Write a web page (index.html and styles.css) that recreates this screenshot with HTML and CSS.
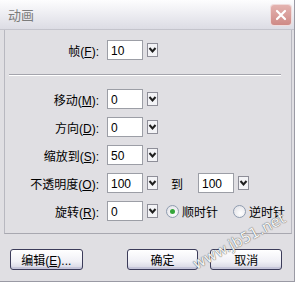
FILE: index.html
```html
<!DOCTYPE html>
<html lang="zh">
<head>
    <meta charset="UTF-8">
    <title>动画</title>
    <link rel="stylesheet" href="styles.css">
</head>
<body>
    <div class="window">
        <div class="titlebar">
            <span class="title">动画</span>
            <span class="close">
                <svg width="20" height="20" viewBox="0 0 20 20"><path d="M6 6 L14 14 M14 6 L6 14" stroke="#fff" stroke-width="2.2" stroke-linecap="round"/></svg>
            </span>
        </div>

        <div class="content">
            <div class="row">
                <label class="lbl">帧(<u>F</u>):</label>
                <span class="field">10</span>
                <span class="drop"><svg width="11" height="14" viewBox="0 0 11 14"><rect x="0.5" y="0.5" width="10" height="13" fill="#f3f3f6" stroke="#8e8e98"/><path d="M2.5 5 L5.5 8.5 L8.5 5" fill="none" stroke="#1e1e1e" stroke-width="2"/></svg></span>
            </div>

            <div class="sep"></div>

            <div class="row">
                <label class="lbl">移动(<u>M</u>):</label>
                <span class="field">0</span>
                <span class="drop"><svg width="11" height="14" viewBox="0 0 11 14"><rect x="0.5" y="0.5" width="10" height="13" fill="#f3f3f6" stroke="#8e8e98"/><path d="M2.5 5 L5.5 8.5 L8.5 5" fill="none" stroke="#1e1e1e" stroke-width="2"/></svg></span>
            </div>
            <div class="row">
                <label class="lbl">方向(<u>D</u>):</label>
                <span class="field">0</span>
                <span class="drop"><svg width="11" height="14" viewBox="0 0 11 14"><rect x="0.5" y="0.5" width="10" height="13" fill="#f3f3f6" stroke="#8e8e98"/><path d="M2.5 5 L5.5 8.5 L8.5 5" fill="none" stroke="#1e1e1e" stroke-width="2"/></svg></span>
            </div>
            <div class="row">
                <label class="lbl">缩放到(<u>S</u>):</label>
                <span class="field">50</span>
                <span class="drop"><svg width="11" height="14" viewBox="0 0 11 14"><rect x="0.5" y="0.5" width="10" height="13" fill="#f3f3f6" stroke="#8e8e98"/><path d="M2.5 5 L5.5 8.5 L8.5 5" fill="none" stroke="#1e1e1e" stroke-width="2"/></svg></span>
            </div>
            <div class="row">
                <label class="lbl">不透明度(<u>O</u>):</label>
                <span class="field">100</span>
                <span class="drop"><svg width="11" height="14" viewBox="0 0 11 14"><rect x="0.5" y="0.5" width="10" height="13" fill="#f3f3f6" stroke="#8e8e98"/><path d="M2.5 5 L5.5 8.5 L8.5 5" fill="none" stroke="#1e1e1e" stroke-width="2"/></svg></span>
                <span class="to">到</span>
                <span class="field">100</span>
                <span class="drop"><svg width="11" height="14" viewBox="0 0 11 14"><rect x="0.5" y="0.5" width="10" height="13" fill="#f3f3f6" stroke="#8e8e98"/><path d="M2.5 5 L5.5 8.5 L8.5 5" fill="none" stroke="#1e1e1e" stroke-width="2"/></svg></span>
            </div>
            <div class="row">
                <label class="lbl">旋转(<u>R</u>):</label>
                <span class="field">0</span>
                <span class="drop"><svg width="11" height="14" viewBox="0 0 11 14"><rect x="0.5" y="0.5" width="10" height="13" fill="#f3f3f6" stroke="#8e8e98"/><path d="M2.5 5 L5.5 8.5 L8.5 5" fill="none" stroke="#1e1e1e" stroke-width="2"/></svg></span>
                <span class="radio checked"></span><span class="radio-text">顺时针</span>
                <span class="radio"></span><span class="radio-text">逆时针</span>
            </div>
        </div>

        <div class="buttons">
            <button class="btn btn-edit">编辑(<u>E</u>)...</button>
            <button class="btn btn-ok">确定</button>
            <button class="btn">取消</button>
        </div>

        <div class="watermark">www.jb51.net</div>
    </div>
</body>
</html>
```

FILE: styles.css
```css
/* XP silver style dialog */
body {
    margin: 0;
    background: #fff;
    font-family: "Liberation Sans", "Noto Sans CJK SC", sans-serif;
    font-size: 12px;
    color: #000;
}
.window {
    position: relative;
    width: 294px;
    height: 281px;
    background: #e0dfe3;
    border-right: 1px solid #9a9aa4;
    border-bottom: 1px solid #9a9aa4;
    overflow: hidden;
}
.titlebar {
    height: 29px;
    display: flex;
    align-items: center;
    justify-content: space-between;
    padding: 0 3px 0 8px;
    background: linear-gradient(#fdfdfe, #f0f0f4 40%, #dcdce4);
    border-bottom: 1px solid #c4c4cc;
}
.title {
    color: #7c7c7c;
    font-size: 13px;
}
.close {
    width: 20px;
    height: 20px;
    border-radius: 3px;
    background: linear-gradient(#e4b3b0, #cf8a86);
    box-shadow: 0 0 0 1px #f0dcdc;
}
.close svg {
    display: block;
}
.content {
    margin-left: 4px;
    margin-right: 2px;
    padding: 10px 0 12px;
    border-left: 1px solid #b8b8c0;
    border-right: 1px solid #b8b8c0;
    border-bottom: 1px solid #a8a8b0;
    display: flex;
    flex-direction: column;
    gap: 8px;
}
.row {
    display: flex;
    align-items: center;
    height: 20px;
    white-space: nowrap;
}
.row > * {
    flex-shrink: 0;
}
.lbl {
    width: 94px;
    margin-right: 8px;
    text-align: right;
}
.field {
    box-sizing: border-box;
    width: 36px;
    height: 20px;
    padding: 3px 0 0 3px;
    background: #fff;
    border: 1px solid #9c9ea6;
}
.drop {
    margin-left: 4px;
    height: 14px;
}
.drop svg {
    display: block;
}
.to {
    margin-left: 13px;
    margin-right: 15px;
}
.sep {
    margin: 6px 10px 5px 4px;
    height: 0;
    border-top: 1px solid #a4a4ac;
    border-bottom: 1px solid #fff;
}
.radio {
    box-sizing: border-box;
    width: 13px;
    height: 13px;
    margin-left: 8px;
    border-radius: 50%;
    border: 1px solid #8f9cb0;
    background: radial-gradient(circle at 60% 65%, #fff, #dcdce2);
    display: flex;
    align-items: center;
    justify-content: center;
}
.radio.checked::after {
    content: "";
    width: 5px;
    height: 5px;
    border-radius: 50%;
    background: #35a53a;
}
.radio-text {
    margin-left: 3px;
    margin-right: 7px;
}
.buttons {
    display: flex;
    padding: 15px 0 0 10px;
}
.btn {
    box-sizing: border-box;
    width: 72px;
    height: 21px;
    margin-right: 12px;
    font: inherit;
    color: #000;
    border: 1px solid #3c3c5a;
    border-radius: 3px;
    background: linear-gradient(#ffffff, #f0f0f6 60%, #d4d4e2);
    box-shadow: inset 0 -2px 0 #c6c6da;
    padding: 0;
}
.btn-edit {
    width: 73px;
    margin-right: 44px;
}
.btn-ok {
    margin-right: 12px;
}
.watermark {
    position: absolute;
    left: 188px;
    top: 232px;
    transform: rotate(-28deg);
    font-family: "DejaVu Sans", sans-serif;
    font-size: 15px;
    color: #f4f4f4;
    text-shadow: 0 0 1px #666, 0 0 1px #666;
}
```
